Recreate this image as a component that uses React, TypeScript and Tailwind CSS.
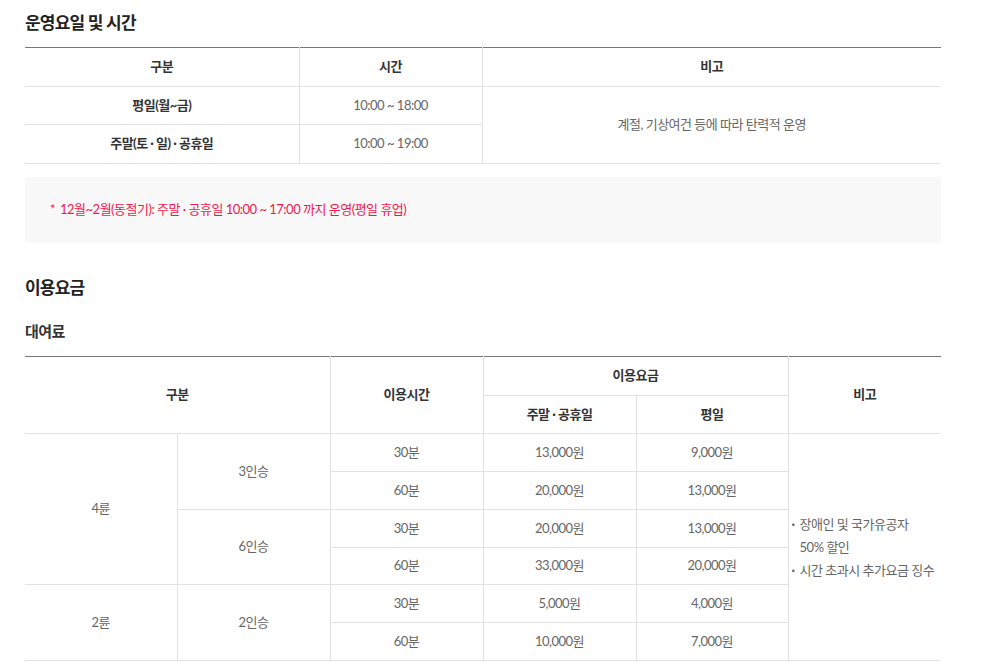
const font = "font-['Lato','Noto_Sans_CJK_KR',sans-serif]";

const hoursRows = [
  { label: "평일(월~금)", time: "10:00 ~ 18:00", h: "h-[38px]" },
  { label: "주말(토 · 일) · 공휴일", time: "10:00 ~ 19:00", h: "h-[39px]" },
];

const th = "border border-[#e2e2e2] font-bold text-[#333] text-[13px] text-center";
const td = "border border-[#e2e2e2] text-[#666] text-[13px] text-center";

export default function App() {
  return (
    <div className={`${font} bg-white w-[996px] h-[670px] overflow-hidden tracking-[-0.5px]`}>
      <div className="ml-[25px] w-[916px]">
        {/* 운영요일 */}
        <h2 className="pt-[11px] text-[17px] font-semibold text-[#222] leading-[24px] tracking-[-0.8px]">
          운영요일 및 시간
        </h2>
        <table className="mt-[12px] w-full border-collapse border-t border-t-[#777] [&_td:first-child]:border-l-0 [&_th:first-child]:border-l-0 [&_td:last-child]:border-r-0 [&_th:last-child]:border-r-0">
          <thead>
            <tr className="h-[39px]">
              <th className={`${th} w-[274px] border-t-[#777]`}>구분</th>
              <th className={`${th} w-[183px] border-t-[#777]`}>시간</th>
              <th className={`${th} border-t-[#777]`}>비고</th>
            </tr>
          </thead>
          <tbody>
            {hoursRows.map((r, i) => (
              <tr key={i} className={r.h}>
                <td className={`${td} font-bold !text-[#333]`}>{r.label}</td>
                <td className={td}>{r.time}</td>
                {i === 0 && (
                  <td rowSpan={2} className={td}>
                    계절, 기상여건 등에 따라 탄력적 운영
                  </td>
                )}
              </tr>
            ))}
          </tbody>
        </table>

        <div className="mt-[13px] h-[66px] bg-[#f8f8f8] flex items-center pl-[25px] text-[13px] text-[#f0194e]">
          <span className="mr-[5px]">*</span>
          12월~2월(동절기): 주말 · 공휴일 10:00 ~ 17:00 까지 운영(평일 휴업)
        </div>

        {/* 이용요금 */}
        <h2 className="mt-[33px] text-[17px] font-semibold text-[#222] leading-[24px] tracking-[-0.8px]">
          이용요금
        </h2>
        <h3 className="mt-[20px] text-[15px] font-semibold text-[#333] leading-[22px] tracking-[-0.6px]">
          대여료
        </h3>
        <table className="mt-[14px] w-full border-collapse [&_td:first-child]:border-l-0 [&_th:first-child]:border-l-0 [&_td:last-child]:border-r-0 [&_th:last-child]:border-r-0">
          <thead>
            <tr className="h-[39px]">
              <th colSpan={2} rowSpan={2} className={`${th} border-t-[#777] border-l-0`}>구분</th>
              <th rowSpan={2} className={`${th} w-[153px] border-t-[#777]`}>이용시간</th>
              <th colSpan={2} className={`${th} border-t-[#777]`}>이용요금</th>
              <th rowSpan={2} className={`${th} border-t-[#777] border-r-0`}>비고</th>
            </tr>
            <tr className="h-[38px]">
              <th className={`${th} w-[153px]`}>주말 · 공휴일</th>
              <th className={`${th} w-[152px]`}>평일</th>
            </tr>
          </thead>
          <tbody>
            <tr className="h-[38px]">
              <td rowSpan={4} className={`${td} w-[152px] border-l-0`}>4륜</td>
              <td rowSpan={2} className={`${td} w-[153px]`}>3인승</td>
              <td className={td}>30분</td>
              <td className={td}>13,000원</td>
              <td className={td}>9,000원</td>
              <td rowSpan={6} className="border border-[#e2e2e2] border-r-0 text-[13px] text-[#666] text-left align-middle pl-[3px] leading-[23px]">
                <div className="flex gap-[5px]">
                  <span className="font-bold">·</span>
                  <span>
                    장애인 및 국가유공자
                    <br />
                    50% 할인
                  </span>
                </div>
                <div className="flex gap-[5px]">
                  <span className="font-bold">·</span>
                  <span>시간 초과시 추가요금 징수</span>
                </div>
              </td>
            </tr>
            <tr className="h-[38px]">
              <td className={td}>60분</td>
              <td className={td}>20,000원</td>
              <td className={td}>13,000원</td>
            </tr>
            <tr className="h-[38px]">
              <td rowSpan={2} className={td}>6인승</td>
              <td className={td}>30분</td>
              <td className={td}>20,000원</td>
              <td className={td}>13,000원</td>
            </tr>
            <tr className="h-[37px]">
              <td className={td}>60분</td>
              <td className={td}>33,000원</td>
              <td className={td}>20,000원</td>
            </tr>
            <tr className="h-[38px]">
              <td rowSpan={2} className={`${td} border-l-0`}>2륜</td>
              <td rowSpan={2} className={td}>2인승</td>
              <td className={td}>30분</td>
              <td className={td}>5,000원</td>
              <td className={td}>4,000원</td>
            </tr>
            <tr className="h-[38px]">
              <td className={td}>60분</td>
              <td className={td}>10,000원</td>
              <td className={td}>7,000원</td>
            </tr>
          </tbody>
        </table>
      </div>
    </div>
  );
}
